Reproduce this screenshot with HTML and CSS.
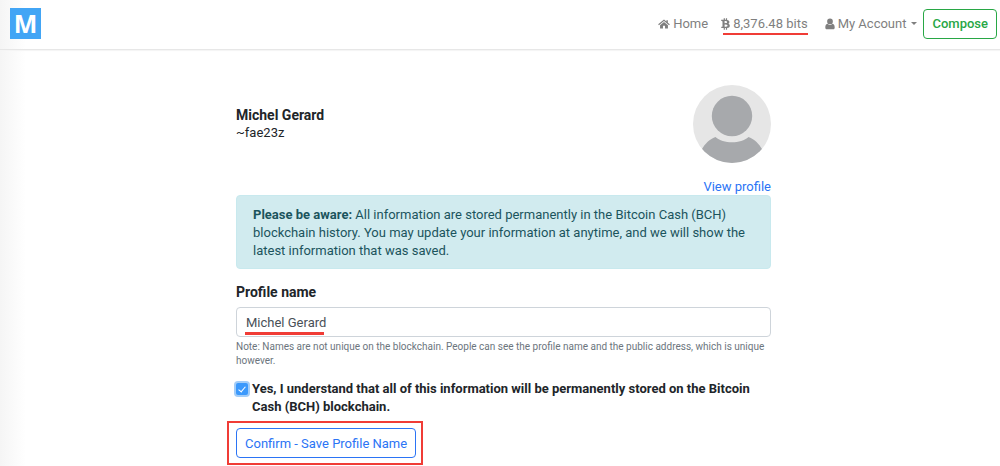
FILE: index.html
```html
<!DOCTYPE html>
<html lang="en">
<head>
    <meta charset="UTF-8" />
    <meta name="viewport" content="width=device-width, initial-scale=1.0" />
    <title>Profile name</title>
    <link rel="stylesheet" href="styles.css">
</head>
<body>
    <header class="navbar">
        <a class="brand" href="#">M</a>
        <nav class="nav-links">
            <a class="nav-link" href="#">
                <svg class="icon" viewBox="0 0 14 12"><path d="M7 .8 9.800 3.100V1.500h1.700v3L13.800 6.400l-.9 1L7 2.600 1.100 7.400l-.9-1zM7 3.700l4.600 3.700V11.300H8.200V8H5.800v3.300H2.400V7.400z" /></svg>
                <span>Home</span>
            </a>
            <a class="nav-link bits" href="#">
                <svg class="icon icon-bitcoin" viewBox="0 0 9 12"><path fill-rule="evenodd" d="M2.700.3h1.200v1.500h1V.3h1.200v1.600c1.500.3 2.300 1 2.300 2.100 0 .9-.4 1.400-1.100 1.700 1 .3 1.500 1 1.500 2 0 1.500-1 2.200-2.700 2.300v1.700H4.900V10h-1v1.700H2.700V10H.2l.2-1.300h.5c.5 0 .6-.1.6-.5V3.700c0-.4-.2-.6-.7-.6H.2V1.800h2.500zM3.600 3.100v2.100c1.600 0 2.500-.1 2.500-1.100S5.200 3.100 3.600 3.100zM3.600 6.400v2.300c1.900 0 2.900-.1 2.900-1.200S5.500 6.400 3.600 6.400z" /></svg>
                <span>8,376.48 bits</span>
            </a>
            <a class="nav-link account" href="#">
                <svg class="icon icon-user" viewBox="0 0 10 12"><path d="M5 .6a2.800 2.800 0 0 1 0 5.700A2.800 2.800 0 0 1 5 .6zM2.500 5.700a3.600 3.600 0 0 0 5 0C9.200 5.900 9.700 7.600 9.700 9.400c0 1.200-.7 1.900-1.700 1.900H2C1 11.300.3 10.600.3 9.400.3 7.600.8 5.900 2.500 5.700z" /></svg>
                <span>My Account</span>
                <span class="caret"></span>
            </a>
            <button class="btn btn-compose" type="button">Compose</button>
        </nav>
    </header>
    <main class="container">
        <section class="profile">
            <div class="profile-text">
                <strong class="profile-name">Michel Gerard</strong>
                <span>~fae23z</span>
            </div>
            <div class="profile-side">
                <svg class="avatar" viewBox="0 0 78 78">
                    <defs>
                        <clipPath id="avatarClip"><circle cx="39" cy="39" r="39" /></clipPath>
                    </defs>
                    <circle cx="39" cy="39" r="39" fill="#e6e6e6" />
                    <g fill="#a7a9ac" clip-path="url(#avatarClip)">
                        <circle cx="39" cy="31" r="20.200" />
                        <path d="M22.500 52C30 59 48 59 55.500 52 62 54.500 66 59 69 64V78H9V64C12 59 16 54.500 22.500 52z" />
                    </g>
                </svg>
                <a class="view-profile" href="#">View profile</a>
            </div>
        </section>
        <div class="alert">
            <strong>Please be aware:</strong> All information are stored permanently in the Bitcoin Cash (BCH) blockchain history. You may update your information at anytime, and we will show the latest information that was saved.
        </div>
        <form>
            <label class="field-label" for="profileName">Profile name</label>
            <div class="field">
                <input type="text" id="profileName" value="Michel Gerard" />
            </div>
            <p class="note">Note: Names are not unique on the blockchain. People can see the profile name and the public address, which is unique however.</p>
            <div class="check">
                <input type="checkbox" id="understand" checked />
                <label for="understand">Yes, I understand that all of this information will be permanently stored on the Bitcoin Cash (BCH) blockchain.</label>
            </div>
            <div class="highlight">
                <button class="btn btn-save" type="button">Confirm - Save Profile Name</button>
            </div>
        </form>
    </main>
</body>
</html>
```
FILE: styles.css
```css
* {
    box-sizing: border-box;
}
body {
    margin: 0;
    min-height: 100vh;
    background: linear-gradient(to right, #f5f5f5, #ffffff 26px);
    color: #212529;
    font-family: Roboto, "Liberation Sans", sans-serif;
    font-size: 13px;
    line-height: 18px;
}
a {
    color: #2b74f5;
    text-decoration: none;
}

/* Navbar */
.navbar {
    display: flex;
    justify-content: space-between;
    align-items: center;
    height: 50px;
    padding: 0 3px 2px 10px;
    border-bottom: 1px solid #e7e7e7;
    box-shadow: 0 1px 1px #f5f5f5;
}
.brand {
    width: 31px;
    height: 31px;
    background-color: #42a5f5;
    color: white;
    font-family: "Noto Sans", sans-serif;
    font-size: 25px;
    font-weight: 700;
    line-height: 30px;
    text-align: center;
}
.nav-links {
    display: flex;
    align-items: center;
}
.nav-link {
    position: relative;
    display: flex;
    align-items: center;
    gap: 3px;
    margin-right: 13px;
    color: #7f7f7f;
}
.icon {
    width: 12px;
    height: 12px;
    fill: #7f7f7f;
}
.icon-bitcoin {
    width: 9px;
}
.icon-user {
    width: 10px;
}
.bits {
    margin-right: 17px;
}
.bits::after {
    content: "";
    position: absolute;
    left: 2px;
    right: 0;
    bottom: -2px;
    height: 2px;
    background-color: #f03c36;
}
.account {
    margin-right: 6px;
}
.caret {
    margin-left: 2px;
    border-top: 3px solid #7f7f7f;
    border-left: 3px solid transparent;
    border-right: 3px solid transparent;
}
.btn {
    height: 30px;
    padding: 0 9px;
    border: 1px solid;
    border-radius: 4px;
    background-color: white;
    font-family: inherit;
    font-size: 13px;
}
.btn-compose {
    padding: 0 8px;
    border-color: #28a745;
    color: #28a745;
    font-weight: 500;
}

/* Profile */
.container {
    max-width: 542px;
    margin: 0 auto;
    padding: 35px 0 0 7px;
}
.profile {
    display: flex;
    justify-content: space-between;
}
.profile-text {
    display: flex;
    flex-direction: column;
    padding-top: 21px;
}
.profile-name {
    font-size: 14px;
}
.profile-side {
    display: flex;
    flex-direction: column;
    align-items: flex-end;
    gap: 16px;
}
.avatar {
    width: 78px;
    height: 78px;
}
.view-profile {
    line-height: 16px;
}
.alert {
    padding: 10px 16px 8px;
    border: 1px solid #c8e9ee;
    border-radius: 4px;
    background-color: #d1ebef;
    color: #1b545d;
}

/* Form */
.field-label {
    display: block;
    margin: 14px 0 6px;
    font-size: 14px;
    font-weight: 700;
}
.field {
    position: relative;
}
.field input {
    display: block;
    width: 100%;
    height: 30px;
    padding: 0 9px;
    border: 1px solid #ced4da;
    border-radius: 4px;
    background-color: white;
    color: #495057;
    font-family: inherit;
    font-size: 13px;
}
.field::after {
    content: "";
    position: absolute;
    left: 9px;
    bottom: 2px;
    width: 79px;
    height: 3px;
    background-color: #f03c36;
}
.note {
    margin: 3px 0 12px;
    color: #6c757d;
    font-size: 10px;
    line-height: 14px;
}
.check {
    display: flex;
    align-items: flex-start;
    gap: 4px;
    font-weight: 700;
}
.check input {
    appearance: none;
    flex: none;
    width: 12px;
    height: 12px;
    margin: 3px 0 0;
    border-radius: 2px;
    background-color: #3b99fc;
    box-shadow: 0 0 0 2px #a3cdf8;
}
.check input::before {
    content: "";
    display: block;
    width: 3px;
    height: 6px;
    margin: 2px auto 0;
    border: solid white;
    border-width: 0 1px 1px 0;
    transform: rotate(40deg);
}
.highlight {
    width: fit-content;
    margin: 5px 0 0 -9px;
    padding: 5px 5px 5px 7px;
    border: 2px solid #f03c36;
}
.btn-save {
    display: block;
    padding: 0 8px;
    border-color: #2b74f5;
    color: #2b74f5;
}
```
